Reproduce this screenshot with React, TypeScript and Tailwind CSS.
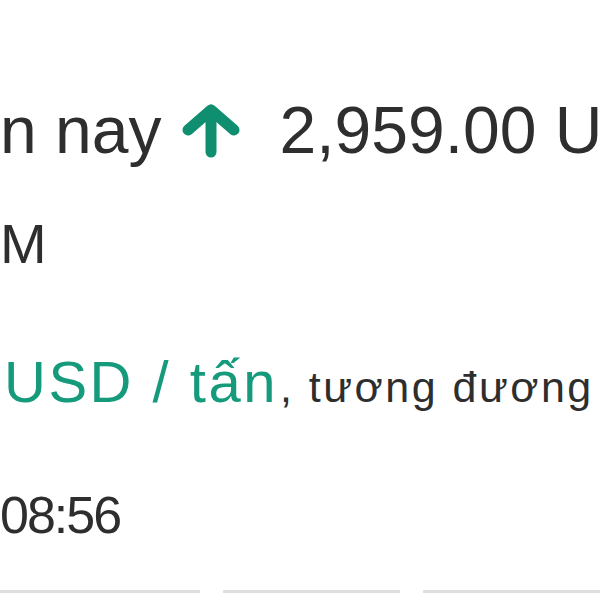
export default function App() {
  return (
    <div
      className="w-[600px] h-[600px] overflow-hidden bg-white text-[#2e2e2e]"
      style={{ fontFamily: '"Liberation Sans", Arial, sans-serif' }}
    >
      <div className="pt-[92px] flex items-center whitespace-nowrap text-[66px] leading-[76px]">
        <span className="shrink-0">n nay</span>
        <svg
          className="shrink-0 ml-[20px] mt-[2px]"
          width="60"
          height="54"
          viewBox="0 0 60 54"
          fill="none"
          stroke="#0f8f6f"
          strokeWidth="11"
          strokeLinecap="round"
          strokeLinejoin="round"
        >
          <path d="M7 26 L30 6 L53 26" />
          <path d="M30 9 V48" />
        </svg>
        <span className="shrink-0 ml-[38px]">2,959.00 USD</span>
      </div>

      <div className="mt-[44px] whitespace-nowrap text-[56px] leading-[64px]">M</div>

      <div className="mt-[74px] flex items-baseline whitespace-nowrap leading-[64px]">
        <span className="shrink-0 ml-[4px] text-[58px] tracking-[2.5px] text-[#159a7b]">USD / tấn</span>
        <span className="shrink-0 ml-[2px] text-[43px] tracking-[2.5px]">, tương đương</span>
      </div>

      <div className="mt-[64px] whitespace-nowrap text-[52px] leading-[64px] tracking-[-2px]">08:56</div>

      <div className="mt-[43px] flex gap-[23px]">
        <div className="shrink-0 w-[200px] h-[3px] bg-[#dedede]" />
        <div className="shrink-0 w-[177px] h-[3px] bg-[#dedede]" />
        <div className="shrink-0 w-[180px] h-[3px] bg-[#dedede]" />
      </div>
    </div>
  )
}
